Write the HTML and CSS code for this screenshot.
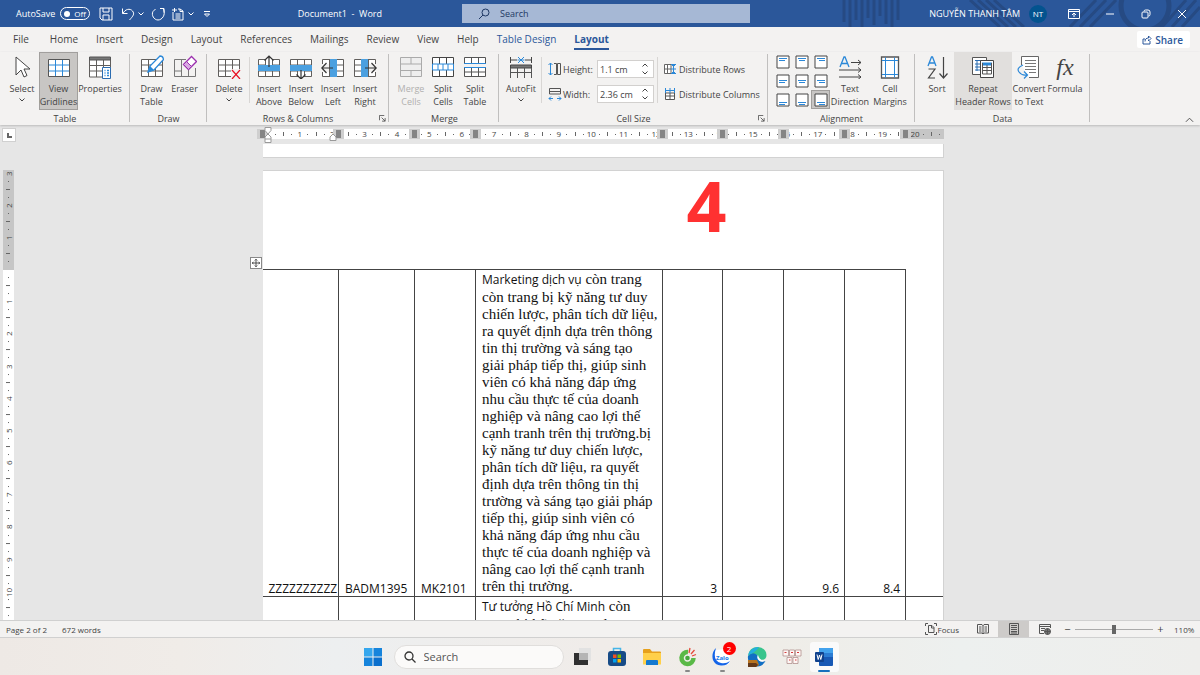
FILE: index.html
```html
<!DOCTYPE html>
<html lang="en">
<head>
  <meta charset="UTF-8">
  <meta name="viewport" content="width=device-width, initial-scale=1.0">
  <title>Document1 - Word</title>
  <link rel="stylesheet" href="styles.css">
</head>
<body>
  <!-- shared icon shapes -->
  <svg class="defs" aria-hidden="true">
    <symbol id="chev" viewBox="0 0 8 8"><path d="M1.5 2.5 4 5l2.5-2.5" fill="none" stroke="currentColor"/></symbol>
    <symbol id="grid" viewBox="0 0 24 24"><path d="M1.5 4.5h21v17h-21zM1.5 10h21M1.5 16h21M8.5 4.500v17M15.500 4.500v17" fill="#fff" stroke="#605e5c"/></symbol>
    <symbol id="launch" viewBox="0 0 8 8"><path d="M.5 6V.5H6M3 3l4 4M7 3.500V7H3.500" fill="none" stroke="#555"/></symbol>
  </svg>

  <header class="titlebar">
    <svg class="pattern" viewBox="0 0 360 27" aria-hidden="true">
      <g stroke="#264a83" stroke-width="3" fill="none">
        <path d="M4 0v22M10 0v27M16 0v20M22 0v27M28 0v18M34 0v25M40 0v16M46 0v24M52 0v27M58 0v20"/>
        <path d="M130 0l30 27M138 0l30 27M146 0l30 27M154 0l30 27M230 27l26-27M240 27l26-27M250 27l26-27"/>
        <circle cx="305" cy="6" r="24" stroke-width="5"/><path d="M322 27l24-27M332 27l24-27M342 27l18-20"/>
      </g>
    </svg>
    <div class="quick">
      <label class="autosave">AutoSave <input type="checkbox" role="switch"><span class="toggle"><i></i>Off</span></label>
      <button class="tb save" aria-label="Save"><svg viewBox="0 0 14 14"><path d="M1 1h12v12H3l-2-2zM4 1v4h6V1M4 13V8h6v5"/></svg></button>
      <button class="tb" aria-label="Undo"><svg viewBox="0 0 14 14"><path d="M1.500 1.500v5h5M2 6.500C4 2 9 1 11.500 4s.5 5-3 9"/></svg></button>
      <button class="tb tiny" aria-label="Undo list"><svg><use href="#chev"/></svg></button>
      <button class="tb redo" aria-label="Repeat"><svg viewBox="0 0 14 14"><path d="M9 1.500h4v4M12.500 2C15 8 11 13 7 13S0 8 2 4.500L4.500 2"/></svg></button>
      <button class="tb" aria-label="Paste"><svg viewBox="0 0 14 14"><path d="M2 5v8h10V4L9 2H7M4.500 7h5M4.500 9h5M4.500 11h5M1 3h5M3.500 1v4M9 2v2.500h3"/></svg></button>
      <button class="tb tiny" aria-label="Paste list"><svg><use href="#chev"/></svg></button>
      <button class="tb tiny more" aria-label="Customize"><svg viewBox="0 0 8 8"><path d="M1 1.500h6M1.500 4 4 6.500 6.500 4z"/></svg></button>
      <span class="doc-name">Document1&nbsp; -&nbsp; Word</span>
    </div>
    <label class="search">
      <svg viewBox="0 0 12 12"><circle cx="7.500" cy="4.500" r="3.500"/><path d="M5 7 1 11"/></svg>
      <input type="text" placeholder="Search" aria-label="Search">
    </label>
    <div class="window">
      <span class="user">NGUYỄN THANH TÂM</span>
      <span class="avatar">NT</span>
      <button class="tb win" aria-label="Ribbon display"><svg viewBox="0 0 12 12"><path d="M.5 1.500h11v9H.5zM.5 3.500h11M6 9V5M4 7l2-2 2 2"/></svg></button>
      <button class="tb win" aria-label="Minimize"><svg viewBox="0 0 12 12"><path d="M2 6h8"/></svg></button>
      <button class="tb win" aria-label="Restore"><svg viewBox="0 0 12 12"><rect x="2" y="4" width="6" height="6" rx="1"/><path d="M4 3.500Q4 2 5.500 2H8q2 0 2 2v2.500Q10 8 8.500 8"/></svg></button>
      <button class="tb win" aria-label="Close"><svg viewBox="0 0 12 12"><path d="m2 2 8 8M10 2l-8 8"/></svg></button>
    </div>
  </header>

  <nav class="tabs">
    <a href="#" class="file">File</a><a href="#">Home</a><a href="#">Insert</a><a href="#">Design</a><a href="#">Layout</a><a href="#">References</a><a href="#">Mailings</a><a href="#">Review</a><a href="#">View</a><a href="#">Help</a><a href="#" class="context">Table Design</a><a href="#" class="context active">Layout</a>
    <button class="share"><svg viewBox="0 0 10 10"><path d="M3 4H1v5h7V6M3 6.500C3 4 4.500 3 6.500 3V1L9 3.500 6.500 6V4.500"/></svg>Share</button>
  </nav>

  <section class="ribbon">
    <div class="group g-table">
      <div class="tools">
        <button class="tool select"><svg viewBox="0 0 24 24"><path d="M6 2v18l5-5 3 7 3-1.500-3-6.500h6z" fill="#fff" stroke="#444"/></svg>Select<svg class="chev"><use href="#chev"/></svg></button>
        <button class="tool gridlines pressed"><svg viewBox="0 0 24 24"><path d="M1.500 4.500h21v17h-21z" fill="#fff" stroke="#555"/><path d="M2 10h20M2 16h20M8.500 5v16M15.500 5v16" stroke="#2b88d8"/></svg>View<br>Gridlines</button>
        <button class="tool props"><svg viewBox="0 0 24 24"><path d="M1.500 5v17h21V5M1.500 10.500h21M1.500 16h21M8.500 5v17M15.500 5v17" fill="#fff" stroke="#605e5c"/><path d="M1.500 2h21v3h-21z" fill="#777" stroke="#555"/><path d="M14.500 12.500h8v11h-8z" fill="#fff" stroke="#2b6cb0"/><path d="M16.500 15.500h1M19 15.500h2M16.500 18h1M19 18h2M16.500 20.500h1M19 20.500h2" stroke="#2b88d8" stroke-width="1.500"/></svg>Properties</button>
      </div>
      <h2>Table</h2>
    </div>
    <div class="group g-draw">
      <div class="tools">
        <button class="tool"><svg viewBox="0 0 24 24"><use href="#grid"/><path d="m8 17 2-6L20 1q3 0 3.500 3.500L14 15z" fill="#fff" stroke="#2b88d8" stroke-width="1.300"/><path d="m8 17 2-6 4 4z" fill="#2b88d8"/></svg>Draw<br>Table</button>
        <button class="tool"><svg viewBox="0 0 24 24"><path d="M22.500 13v8.500h-21v-17H13M8.500 4.500v17M15.500 15v6.500M1.500 16h7" fill="none" stroke="#777"/><path d="m10.500 9.500 8-8 5 5-8 8z" fill="#fff" stroke="#9b2fae" stroke-width="1.300"/><path d="m10.500 9.500 3-3 5 5-3 3z" fill="#d9a9e3" stroke="#9b2fae"/></svg>Eraser</button>
      </div>
      <h2>Draw</h2>
    </div>
    <div class="group g-rows">
      <div class="tools">
        <button class="tool"><svg viewBox="0 0 24 24"><use href="#grid"/><path d="M14 14h10v10H14z" fill="#f3f2f1"/><path d="m15 15 8 9M23 15l-8 9" stroke="#e81123" stroke-width="1.200"/></svg>Delete<svg class="chev"><use href="#chev"/></svg></button>
        <span class="rule"></span>
        <button class="tool"><svg viewBox="0 0 24 24"><use href="#grid"/><path d="M1 10h22v6H1z" fill="#4ba0e0"/><path d="M9 4h6v6H9z" fill="#fff"/><path d="M12 12V1M7.500 5.500 12 1l4.500 4.500" fill="none" stroke="#333" stroke-width="1.200"/></svg>Insert<br>Above</button>
        <button class="tool"><svg viewBox="0 0 24 24"><use href="#grid"/><path d="M1 10h22v6H1z" fill="#4ba0e0"/><path d="M9 16.500h6V22H9z" fill="#fff"/><path d="M12 15v9M7.500 19.500 12 24l4.500-4.500" fill="none" stroke="#333" stroke-width="1.200"/></svg>Insert<br>Below</button>
        <button class="tool"><svg viewBox="0 0 24 24"><use href="#grid"/><path d="M9 4h7v18H9z" fill="#4ba0e0"/><path d="M1 9h7v8H1z" fill="#f3f2f1"/><path d="M12 13H1M5.500 8 .8 13l4.700 5" fill="none" stroke="#333" stroke-width="1.200"/></svg>Insert<br>Left</button>
        <button class="tool"><svg viewBox="0 0 24 24"><use href="#grid"/><path d="M8 4h7v18H8z" fill="#4ba0e0"/><path d="M16 9h8v8h-8z" fill="#f3f2f1"/><path d="M12 13h11M18.500 8l4.700 5-4.700 5" fill="none" stroke="#333" stroke-width="1.200"/></svg>Insert<br>Right</button>
      </div>
      <h2>Rows &amp; Columns</h2>
      <button class="launcher" aria-label="Rows and columns options"><svg><use href="#launch"/></svg></button>
    </div>
    <div class="group g-merge">
      <div class="tools">
        <button class="tool" disabled><svg viewBox="0 0 24 24"><path d="M1.500 2.500h21v19h-21zM1.500 9h21M1.500 15.500h21M12 2.500V9M12 15.500v6" fill="#eee" stroke="#aaa"/></svg>Merge<br>Cells</button>
        <button class="tool"><svg viewBox="0 0 24 24"><path d="M1.500 2.500h21v19h-21zM8.500 2.500v19M15.500 2.500v19" fill="#fff" stroke="#444"/><path d="M1.500 9h21v6h-21zM7 9v6M12 9v6M17 9v6" fill="#fff" stroke="#2b88d8"/></svg>Split<br>Cells</button>
        <button class="tool"><svg viewBox="0 0 24 24"><path d="M1.500 2.500h21v6h-21zM8.500 2.500v6M15.500 2.500v6M1.500 12.500h21v9h-21zM1.500 17h21M8.500 12.500v9M15.500 12.500v9" fill="#fff" stroke="#555"/><path d="M1 8.500h22M1 12.500h22" stroke="#2b88d8"/></svg>Split<br>Table</button>
      </div>
      <h2>Merge</h2>
    </div>
    <div class="group g-size">
      <div class="tools">
        <button class="tool"><svg viewBox="0 0 24 24"><path d="M1.500 2v6M22.500 2v6M1.500 5H8M16 5h6.500" stroke="#444"/><path d="m9 2 6 6M15 2 9 8M8.500 5h7" stroke="#2b88d8"/><path d="M1.500 10h21v3h-21z" fill="#777" stroke="#444"/><path d="M1.500 13v10M22.500 13v10M8.500 13v10M15.500 13v10M1.500 17.500h21" fill="none" stroke="#555"/></svg>AutoFit<svg class="chev"><use href="#chev"/></svg></button>
        <span class="rule"></span>
        <div class="sizes">
          <div class="field">
            <svg viewBox="0 0 14 14"><path d="M2.500 1v12M.5 3l2-2 2 2M.5 11l2 2 2-2" fill="none" stroke="#2b88d8"/><path d="M6 1.500h2.500v11H6M9.500 1.500h3v11h-3z" fill="none" stroke="#555"/></svg>
            <label for="cell-height">Height:</label>
            <span class="spin"><input id="cell-height" type="text" value="1.1 cm"><span class="arrows"><button class="up" aria-label="Increase height"><svg><use href="#chev"/></svg></button><button aria-label="Decrease height"><svg><use href="#chev"/></svg></button></span></span>
          </div>
          <div class="field">
            <svg viewBox="0 0 14 14"><path d="M1.500 7V1.500h11V7M1.500 4.500h11M1.500 7h11" fill="none" stroke="#555"/><path d="M1 11.500h4M9 11.500h4M3 9.500l-2 2 2 2M11 9.500l2 2-2 2" fill="none" stroke="#2b88d8"/></svg>
            <label for="cell-width">Width:</label>
            <span class="spin"><input id="cell-width" type="text" value="2.36 cm"><span class="arrows"><button class="up" aria-label="Increase width"><svg><use href="#chev"/></svg></button><button aria-label="Decrease width"><svg><use href="#chev"/></svg></button></span></span>
          </div>
        </div>
        <span class="rule"></span>
        <div class="distribute">
          <button><svg viewBox="0 0 12 12"><path d="M.5 1.500H7v9H.5zM.5 6H7M3.500 1.500v9" fill="#fff" stroke="#666"/><path d="M7 1.500h5M7 6h5M7 10.500h5M9.500 1v10M8 3l1.500-1.500L11 3M8 9l1.500 1.500L11 9" fill="none" stroke="#2b88d8"/></svg>Distribute Rows</button>
          <button><svg viewBox="0 0 12 12"><path d="M1.500 5v6.500h9V5zM1.500 8h9M6 5v6.500" fill="#fff" stroke="#555"/><path d="M1.500 0v5M6 0v5M10.500 0v5M1 2.500h10" stroke="#2b88d8"/></svg>Distribute Columns</button>
        </div>
      </div>
      <h2>Cell Size</h2>
      <button class="launcher" aria-label="Cell size options"><svg><use href="#launch"/></svg></button>
    </div>
    <div class="group g-align">
      <div class="tools">
        <div class="align-grid" id="alignGrid"></div>
        <button class="tool"><svg viewBox="0 0 24 24"><path d="m2 12 4-10h1l4 10M3.500 8.500h6" fill="none" stroke="#2b88d8" stroke-width="1.300"/><path d="M13 7.500h10M20 5l3 2.500-3 2.500M1 15h22M20 12.500l3 2.500-3 2.500M1 22h22M20 19.500l3 2.500-3 2.500" fill="none" stroke="#444"/></svg>Text<br>Direction</button>
        <button class="tool margins"><svg viewBox="0 0 24 24"><path d="M3.500 2h17v21h-17z" fill="#fff" stroke="#555" stroke-width="1.300"/><path d="M7.500 2.500v20M16.500 2.500v20M4 5.500h16M4 19.500h16" stroke="#2b88d8"/></svg>Cell<br>Margins</button>
      </div>
      <h2>Alignment</h2>
    </div>
    <div class="group g-data">
      <div class="tools">
        <button class="tool sort"><svg viewBox="0 0 24 24"><path d="M3 11 6.500 2h1L11 11M4.500 8h5" fill="none" stroke="#2b88d8" stroke-width="1.300"/><path d="M3.500 14h6.500l-6.500 9H10M18.500 2v21M14.500 18.500l4 4.500 4-4.500" fill="none" stroke="#444" stroke-width="1.200"/></svg>Sort</button>
        <button class="tool repeat"><svg viewBox="0 0 24 24"><path d="M1.500 2.500h14v17h-14z" fill="#fff" stroke="#555"/><path d="M4 5.500h10M4 9h5M4 12h5M4 15h5M6 5v11" stroke="#2b6cb0"/><path d="M9.500 5.500h13v17h-13z" fill="#fff" stroke="#444"/><path d="M11 9h10" stroke="#2b88d8" stroke-width="3"/><path d="M11.500 8v11h9V8M11.500 12.500h9M11.500 15.500h9M16 10v9" fill="none" stroke="#555"/></svg>Repeat<br>Header Rows</button>
        <button class="tool"><svg viewBox="0 0 24 24"><path d="M4.500 10V1.500h17v21H12" fill="#fff" stroke="#666"/><path d="M8 5.500h11M8 8.500h11M8 11.500h11M8 14.500h11M12 17.500h7" stroke="#777"/><path d="M6 10Q-1 13 2 17t8 3M7 16.500l3.500 3.500L7 23.500" fill="none" stroke="#2b88d8" stroke-width="1.200"/></svg>Convert<br>to Text</button>
        <button class="tool formula"><span class="fx">fx</span>Formula</button>
      </div>
      <h2>Data</h2>
    </div>
    <button class="collapse" aria-label="Collapse the ribbon"><svg viewBox="0 0 10 6"><path d="m1 5 4-4 4 4"/></svg></button>
  </section>

  <main class="workspace">
    <aside class="left-rail">
      <button class="tab-stop" aria-label="Tab selector"><i></i></button>
      <div class="v-ruler">
        <div class="v-top" id="rulerTop"></div>
        <div class="v-body" id="rulerBody"></div>
      </div>
    </aside>
    <div class="canvas">
      <div class="h-ruler">
        <div class="h-scale" id="rulerH"></div>
        <div class="markers" id="markers"></div>
        <svg class="indent first" viewBox="0 0 8 16"><path d="M1 .5h6v3L4 7 1 3.500zM4 7l3 3v5.500H1V10zM1 12h6" fill="#fff" stroke="#999"/></svg>
        <svg class="indent right" viewBox="0 0 8 8"><path d="m4 1 3 3v3.500H1V4z" fill="#fff" stroke="#999"/></svg>
      </div>
      <div class="sheet previous"></div>
      <article class="sheet">
        <button class="move" aria-label="Move table"><svg viewBox="0 0 12 12"><path d="M6 1.500v9M1.500 6h9M4.500 3 6 1.500 7.500 3M4.500 9 6 10.500 7.500 9M3 4.500 1.500 6 3 7.500M9 4.500 10.500 6 9 7.500"/></svg></button>
        <strong class="step">4</strong>
        <table>
          <colgroup><col class="c-76"><col class="c-76"><col class="c-61"><col class="c-187"><col class="c-60"><col class="c-61"><col class="c-61"><col class="c-61"><col></colgroup>
          <tbody>
            <tr class="filled">
              <td>ZZZZZZZZZZ</td>
              <td>BADM1395</td>
              <td>MK2101</td>
              <td class="text"><span>Marketing dịch vụ</span> còn trang<br>còn trang bị kỹ năng tư duy<br>chiến lược, phân tích dữ liệu,<br>ra quyết định dựa trên thông<br>tin thị trường và sáng tạo<br>giải pháp tiếp thị, giúp sinh<br>viên có khả năng đáp ứng<br>nhu cầu thực tế của doanh<br>nghiệp và nâng cao lợi thế<br>cạnh tranh trên thị trường.bị<br>kỹ năng tư duy chiến lược,<br>phân tích dữ liệu, ra quyết<br>định dựa trên thông tin thị<br>trường và sáng tạo giải pháp<br>tiếp thị, giúp sinh viên có<br>khả năng đáp ứng nhu cầu<br>thực tế của doanh nghiệp và<br>nâng cao lợi thế cạnh tranh<br>trên thị trường.</td>
              <td class="num">3</td>
              <td></td>
              <td class="num">9.6</td>
              <td class="num">8.4</td>
              <td class="outer"></td>
            </tr>
            <tr>
              <td></td><td></td><td></td>
              <td class="text"><span>Tư tưởng Hồ Chí Minh</span> còn<br>trang bị kỹ năng tư duy</td>
              <td></td><td></td><td></td><td></td><td class="outer"></td>
            </tr>
          </tbody>
        </table>
      </article>
    </div>
  </main>

  <footer class="statusbar">
    <span>Page 2 of 2</span><span>672 words</span>
    <div class="views">
      <button class="focus"><svg viewBox="0 0 12 12"><path d="M.5 3V.5H3M9 .5h2.500V3M.5 9v2.500H3M9 11.500h2.500V9M3.500 2.500H7l2 2v5H3.500zM6.500 2.500v2.500H9"/></svg>Focus</button>
      <button class="view" aria-label="Read mode"><svg viewBox="0 0 12 12"><path d="M.5 1.500H5l1 1 1-1h4.500v8.500H7l-1 1-1-1H.5zM6 2v9M2 4h2.500M2 6h2.500M2 8h2.500M7.500 4H10M7.500 6H10M7.500 8H10"/></svg></button>
      <button class="view on" aria-label="Print layout"><svg viewBox="0 0 12 12"><path d="M1.500.5h9v11h-9zM3 2.500h6M3 4.500h6M3 6.500h6M3 8.500h6M3 10h6"/></svg></button>
      <button class="view" aria-label="Web layout"><svg viewBox="0 0 12 12"><path d="M5 10.500H.5v-9h11V5M.5 3.500h11M2 5.500h4M2 7.500h3"/><circle cx="8.500" cy="8.500" r="3" fill="#777"/><path d="M5.500 8.500h6M8.500 5.500v6"/></svg></button>
      <button class="zoom-btn" aria-label="Zoom out">−</button>
      <input type="range" min="10" max="210" value="110" aria-label="Zoom">
      <button class="zoom-btn" aria-label="Zoom in">+</button>
      <span class="percent">110%</span>
    </div>
  </footer>

  <nav class="taskbar">
    <button class="app" aria-label="Start"><svg viewBox="0 0 20 20"><g fill="#1684dc"><path d="M1 1h8.500v8.500H1z" fill="#35a7ee"/><path d="M10.500 1H19v8.500h-8.500zM1 10.500h8.500V19H1z"/><path d="M10.500 10.500H19V19h-8.500z" fill="#0a6fcd"/></g></svg></button>
    <label class="task-search"><svg viewBox="0 0 12 12"><circle cx="5" cy="5" r="4"/><path d="m8 8 3.500 3.500"/></svg><input type="text" placeholder="Search" aria-label="Search Windows"></label>
    <button class="app" aria-label="Task view"><svg viewBox="0 0 20 20"><path d="M7 1h12v13H7z" fill="#e2e2e2"/><path d="M2 6h14v12H2z" fill="#303030"/><path d="M7 6h9v7H7z" fill="#b5b5b5"/></svg></button>
    <button class="app" aria-label="Store"><svg viewBox="0 0 20 20"><path d="M6.500 5V1.500h7V5" fill="none" stroke="#45b5e8" stroke-width="1.500"/><rect x="1" y="4" width="18" height="15" rx="3" fill="#174b87"/><path d="M6 7.500h3.500V11H6z" fill="#f25022"/><path d="M10.500 7.500H14V11h-3.500z" fill="#7fba00"/><path d="M6 12h3.500v3.500H6z" fill="#00a4ef"/><path d="M10.500 12H14v3.500h-3.500z" fill="#ffb900"/></svg></button>
    <button class="app" aria-label="File Explorer"><svg viewBox="0 0 20 20"><path d="M1 3q0-1 1-1h6l2 2.500h8q1 0 1 1V17H1z" fill="#e6a01c"/><path d="M1 6h18v11.500H1z" fill="#ffd04a"/><path d="M4 18v-4q0-1 1-1h10q1 0 1 1v4z" fill="#1479d0"/></svg></button>
    <button class="app running" aria-label="Coc Coc"><svg viewBox="0 0 20 20"><path d="M11 5a6 6 0 1 0 5.500 6" fill="none" stroke="#5ab947" stroke-width="4.500"/><circle cx="10.500" cy="11" r="2.300" fill="#45a83d"/><path d="m12 6 1-5M14 7l3.500-4M15 9l4-1.500" stroke="#e5493a" stroke-width="1.300"/></svg></button>
    <button class="app running" aria-label="Zalo"><svg viewBox="0 0 20 20"><path d="M2 3Q0 10 3 15q5 6 14 2l1-3-1-12z" fill="#fff"/><path d="M4 1Q-1 6 1 13q2 5 8 5.500 6 .5 9-4.500-4 3-9 2Q0 14 4 1z" fill="#1464e8"/><text x="4" y="13" font-size="6" font-weight="700" fill="#1677e8">Zalo</text></svg><span class="badge">2</span></button>
    <button class="app" aria-label="Edge"><svg viewBox="0 0 20 20"><path d="M1 9Q2 0 11 0q8 1 8.500 8 0 5-6 5-3 0-2-3Q9 5 1 9z" fill="#38c48c"/><path d="M1 9q5-5 9-1 2 2 1.500 4 1 4 7 2-4 7-11 5Q0 17 1 9z" fill="#126fc4"/><path d="M1 8Q4 0 12 0q-4 6-11 8z" fill="#24aee0"/><path d="M11 8q-2 3 1 5.500 2 1.500 6 .5-6-1-7-6z" fill="#fff"/><path d="M1 13h9l2 5-3 2H1z" fill="#b77320"/><path d="M1 16h8l2 2-2 2H1z" fill="#643919"/></svg></button>
    <button class="app" aria-label="Keys"><svg viewBox="0 0 20 20"><g fill="#fff6f4" stroke="#a98582" stroke-width=".7"><path d="M1 3h5.500v6H1zM7.500 3h5v6h-5zM13.500 3H19v6h-5.500zM5 10.500h5v6H5zM11 10.500h5v6h-5z"/></g><path d="M2.500 5.500h2M9 5.500h2M15 5.500h2M7 13h1.500M13 13h1.500" stroke="#d43c3c"/></svg></button>
    <button class="app word" aria-label="Word"><svg viewBox="0 0 20 20"><rect x="5" y="1" width="14" height="18" rx="1" fill="#1859b5"/><path d="M5 2q0-1 1-1h12q1 0 1 1v4H5z" fill="#42a2ed"/><path d="M5 6h14v4H5z" fill="#2b7cd3"/><rect x="1" y="5" width="9" height="10" rx="1" fill="#10428e"/><path d="m3 7.500 1.200 5L5.500 8l1.300 4.500L8 7.500" fill="none" stroke="#fff"/></svg></button>
  </nav>

  <script>
    // quarter centimetre ticks, the number sits on every fourth one
    function ticks(id, count, reverse) {
      const ruler = document.getElementById(id);
      for (let i = 1; i <= count; i++) {
        const tick = document.createElement("span");
        if (i % 4 === 0) tick.textContent = i / 4;
        else tick.className = i % 4 === 2 ? "half" : "dot";
        if (reverse) ruler.prepend(tick);
        else ruler.appendChild(tick);
      }
    }
    ticks("rulerH", 83);
    ticks("rulerTop", 12, true);
    ticks("rulerBody", 43);

    // column markers, in px from the left edge of the page
    [-6, 70, 146, 207, 394, 454, 515, 576, 637].forEach(x => {
      const mark = document.createElement("i");
      mark.style.left = x + "px";
      document.getElementById("markers").appendChild(mark);
    });

    // nine cell alignment buttons
    ["Top", "Center", "Bottom"].forEach((row, r) => {
      ["Left", "Center", "Right"].forEach((col, c) => {
        const y = 3 + r * 3;
        const x = 3 + c;
        document.getElementById("alignGrid").innerHTML +=
          `<button aria-label="Align ${row} ${col}" class="${r === 2 && c === 2 ? "pressed" : ""}">
            <svg viewBox="0 0 14 14"><path d="M1 1h12v12H1z" fill="#fff" stroke="#444"/>
            <path d="M3 ${y + .5}h8M${x} ${y + 2.5}h6" stroke="#2b88d8"/></svg></button>`;
      });
    });
  </script>
</body>
</html>
```

FILE: styles.css
```css
* {
  box-sizing: border-box;
}

body {
  margin: 0;
  height: 100vh;
  display: flex;
  flex-direction: column;
  overflow: hidden;
  font-family: "Open Sans", "Noto Sans", sans-serif;
  font-size: 9px;
  color: #444;
  background: #e6e6e6;
}

button, input {
  font: inherit;
  color: inherit;
}

button {
  padding: 0;
  border: 0;
  background: none;
}

a {
  color: inherit;
  text-decoration: none;
}

svg {
  display: block;
  flex: none;
}

.defs {
  position: absolute;
  width: 0;
  height: 0;
}

/* title bar */
.titlebar {
  position: relative;
  flex: none;
  height: 27px;
  display: grid;
  grid-template-columns: 462px 24% 1fr;
  align-items: center;
  background: #2b579a;
  color: #fff;
}

.pattern {
  position: absolute;
  right: 0;
  top: 0;
  width: 360px;
  height: 27px;
}

.quick, .window {
  position: relative;
  display: flex;
  align-items: center;
}

.quick {
  padding-left: 16px;
}

.autosave {
  display: flex;
  align-items: center;
  gap: 5px;
  margin-right: 9px;
}

.autosave input {
  position: absolute;
  opacity: 0;
}

.toggle {
  display: flex;
  align-items: center;
  gap: 4px;
  width: 30px;
  height: 13px;
  padding-left: 3px;
  border: 1px solid #fff;
  border-radius: 7px;
  font-size: 8px;
}

.toggle i {
  width: 6px;
  height: 6px;
  border-radius: 50%;
  background: #fff;
}

.tb svg {
  width: 14px;
  height: 14px;
  fill: none;
  stroke: #fff;
}

.tb.save {
  margin-right: 8px;
}

.tb.redo {
  margin: 0 6px;
}

.tb.tiny {
  margin-left: 2px;
}

.tb.tiny svg {
  width: 8px;
  height: 8px;
}

.tb.more {
  margin-left: 8px;
}

.doc-name {
  margin-left: auto;
  margin-right: 80px;
}

.search {
  display: flex;
  align-items: center;
  gap: 10px;
  height: 19px;
  padding-left: 16px;
  background: #a6b8d5;
  color: #1f3864;
}

.search svg {
  width: 12px;
  height: 12px;
  fill: none;
  stroke: #1f3864;
}

.search input, .task-search input {
  flex: 1;
  min-width: 0;
  padding: 0;
  border: 0;
  outline: 0;
  background: none;
}

.search input::placeholder {
  color: #1f3864;
  opacity: 1;
}

.window {
  justify-content: flex-end;
}

.avatar {
  width: 18px;
  height: 18px;
  margin: 0 9px;
  border-radius: 50%;
  background: #03538f;
  font-size: 8px;
  line-height: 18px;
  text-align: center;
}

.win {
  width: 36px;
  display: flex;
  justify-content: center;
}

.win svg {
  width: 12px;
  height: 12px;
}

/* tabs */
.tabs {
  flex: none;
  height: 25px;
  display: flex;
  align-items: center;
  gap: 18px;
  padding: 0 10px 0 13px;
  background: #f3f2f1;
  font-size: 10px;
}

.tabs a {
  line-height: 18px;
  border-bottom: 2px solid transparent;
  white-space: nowrap;
}

.tabs .file {
  margin-right: 3px;
}

.tabs .context {
  color: #2b579a;
}

.tabs .active {
  font-weight: 700;
  border-color: #2b579a;
}

.share {
  display: flex;
  align-items: center;
  gap: 3px;
  height: 17px;
  margin-left: auto;
  padding: 0 7px 0 5px;
  border-radius: 2px;
  background: #fff;
  color: #2b579a;
  font-weight: 600;
}

.share svg {
  width: 10px;
  height: 10px;
  fill: none;
  stroke: #2b579a;
}

/* ribbon */
.ribbon {
  position: relative;
  z-index: 2;
  flex: none;
  display: flex;
  height: 73px;
  background: #f3f2f1;
  box-shadow: 0 1px 2px #bbb;
}

.group {
  position: relative;
  flex: none;
  display: flex;
  flex-direction: column;
  justify-content: space-between;
  padding: 0 5px;
}

.group::after {
  content: "";
  position: absolute;
  right: 0;
  top: 2px;
  bottom: 3px;
  width: 1px;
  background: #c0bfbe;
}

.g-table { width: 130px; }
.g-draw { width: 77px; }
.g-rows { width: 182px; }
.g-merge { width: 110px; }
.g-size { width: 269px; }
.g-align { width: 147px; }
.g-data { width: 175px; }

.g-merge {
  padding-left: 6px;
}

.group h2 {
  margin: 0;
  font-size: 9px;
  line-height: 13px;
  font-weight: 400;
  text-align: center;
}

.tools {
  display: flex;
}

.tool {
  flex: none;
  width: 32px;
  height: 58px;
  padding-top: 3px;
  display: flex;
  flex-direction: column;
  align-items: center;
  line-height: 13px;
  white-space: nowrap;
}

.tool > svg:first-child {
  width: 24px;
  height: 24px;
  margin-bottom: 3px;
}

.tool .chev {
  width: 8px;
  height: 8px;
  margin-top: 1px;
}

.tool:disabled {
  color: #b1b0af;
}

.g-draw .tool {
  width: 33px;
}

.tool.select, .g-rows .tool:first-child, .g-size .tool {
  width: 34px;
}

.tool.gridlines {
  width: 39px;
}

.tool.props {
  width: 44px;
}

.pressed {
  background: #c8c6c4;
  box-shadow: inset 0 0 0 1px #a19f9d;
}

.rule {
  flex: none;
  width: 1px;
  height: 46px;
  margin: 5px 3px 0;
  background: #d8d6d4;
}

.launcher {
  position: absolute;
  right: 3px;
  bottom: 3px;
}

.launcher svg {
  width: 7px;
  height: 7px;
}

.sizes, .distribute {
  display: flex;
  flex-direction: column;
  gap: 7px;
  padding: 8px 0 0 3px;
}

.field {
  display: flex;
  align-items: center;
  height: 18px;
}

.field > svg {
  width: 14px;
  height: 14px;
  margin-right: 1px;
}

.field label {
  width: 34px;
}

.spin {
  display: flex;
  width: 57px;
  height: 18px;
  border: 1px solid #d2d0ce;
  background: #fff;
}

.spin input {
  width: 43px;
  padding: 0 0 0 2px;
  border: 0;
  background: none;
}

.arrows {
  display: flex;
  flex-direction: column;
  justify-content: center;
}

.arrows svg {
  width: 8px;
  height: 8px;
}

.arrows .up svg {
  transform: rotate(180deg);
}

.distribute button {
  display: flex;
  align-items: center;
  gap: 3px;
  height: 18px;
  white-space: nowrap;
}

.distribute svg {
  width: 12px;
  height: 12px;
}

.align-grid {
  display: grid;
  grid-template-columns: repeat(3, 19px);
  grid-auto-rows: 19px;
}

.align-grid button {
  display: grid;
  place-items: center;
}

.align-grid svg {
  width: 14px;
  height: 14px;
}

.g-align .tool {
  width: 40px;
}

.g-data .tool {
  width: 34px;
}

.g-data .tool.repeat {
  width: 58px;
  background: #e1dfdd;
}

.g-data .tool.formula {
  width: 38px;
}

.fx {
  height: 27px;
  font: italic 24px/24px "Liberation Serif", serif;
}

.collapse {
  margin: auto 6px 2px auto;
}

.collapse svg {
  width: 9px;
  height: 6px;
  fill: none;
  stroke: #444;
}

/* document */
.workspace {
  flex: 1;
  min-height: 0;
  display: flex;
  padding-right: 12px;
  overflow: hidden;
}

.left-rail {
  flex: none;
  width: 18px;
  display: flex;
  flex-direction: column;
  padding: 3px 0 0 2px;
}

.tab-stop {
  flex: none;
  width: 14px;
  height: 14px;
  display: grid;
  place-items: center;
  margin-bottom: 28px;
  border: 1px solid #d0d0d0;
  background: #fff;
}

.tab-stop i {
  width: 5px;
  height: 5px;
  border: solid #666;
  border-width: 0 0 2px 2px;
}

.v-ruler {
  flex: 1;
  min-height: 0;
  display: flex;
  flex-direction: column;
  width: 11px;
  margin-left: 1px;
  font-size: 8px;
}

.v-top, .v-body {
  display: flex;
  flex-direction: column;
}

.v-top {
  flex: none;
  height: 100px;
  padding-bottom: 4px;
  background: #c6c6c6;
}

.v-body {
  flex: 1;
  min-height: 0;
  padding-top: 4px;
  background: #fff;
}

.v-ruler span {
  flex: 1 1 0;
  min-height: 0;
  display: flex;
  align-items: center;
  justify-content: center;
  line-height: 11px;
  writing-mode: vertical-rl;
  transform: rotate(180deg);
}

.canvas {
  flex: 1;
  display: flex;
  flex-direction: column;
  align-items: center;
}

.h-ruler {
  position: relative;
  flex: none;
  width: 681px;
  height: 10px;
  margin: 4px 0 5px;
  padding-left: 9px;
  background: linear-gradient(to right, #fff 641px, #c6c6c6 641px);
  font-size: 8px;
}

.h-scale {
  display: flex;
}

.h-scale span {
  flex: 1 1 0;
  min-width: 0;
  height: 10px;
  display: flex;
  align-items: center;
  justify-content: center;
  line-height: 10px;
}

.dot::before, .half::before {
  content: "";
  width: 1px;
  height: 1px;
  background: #666;
}

.h-scale .half::before {
  height: 4px;
}

.v-ruler .half::before {
  width: 4px;
}

.markers i {
  position: absolute;
  top: 0;
  width: 11px;
  height: 10px;
  border: solid #cfcfcf;
  border-width: 1px 3px;
  background: #858585;
}

.indent {
  position: absolute;
}

.indent.first {
  left: 1px;
  top: -2px;
  width: 8px;
  height: 16px;
}

.indent.right {
  left: 66px;
  top: 4px;
  width: 8px;
  height: 8px;
}

.sheet {
  position: relative;
  flex: none;
  width: 681px;
  padding-top: 98px;
  border: 1px solid #d2d2d2;
  border-width: 1px 1px 0 0;
  background: #fff;
}

.sheet.previous {
  height: 14px;
  margin-bottom: 12px;
  padding: 0;
  border-width: 0 1px 1px 0;
}

.move {
  position: absolute;
  left: -13px;
  top: 86px;
  width: 12px;
  height: 12px;
  border: 1px solid #888;
  background: #fff;
}

.move svg {
  width: 10px;
  height: 10px;
  fill: none;
  stroke: #333;
}

.step {
  position: absolute;
  left: 424px;
  top: -1px;
  font-size: 70px;
  line-height: 70px;
  color: #ff3131;
}

table {
  width: 100%;
  table-layout: fixed;
  border-collapse: collapse;
  font-size: 12px;
  line-height: 15px;
  color: #111;
}

.c-76 { width: 76px; }
.c-60 { width: 60px; }
.c-61 { width: 61px; }
.c-187 { width: 187px; }

td {
  padding: 0 6px;
  border: 1px solid #444;
  vertical-align: bottom;
  white-space: nowrap;
}

td:first-child {
  border-left: 0;
}

.filled td {
  height: 327px;
}

td.text {
  padding-top: 1px;
  font: 15px/17px "Liberation Serif", serif;
  vertical-align: top;
}

.text span {
  font: 12px/18px "Open Sans", sans-serif;
}

td.num {
  padding-right: 5px;
  text-align: right;
}

td.outer {
  border-top: 0;
  border-right: 0;
}

/* status bar */
.statusbar {
  position: relative;
  flex: none;
  display: flex;
  align-items: center;
  gap: 15px;
  height: 18px;
  padding: 0 6px;
  border-top: 1px solid #d0d0d0;
  border-bottom: 1px solid #d0d0d0;
  background: #f3f2f1;
  font-size: 8px;
}

.views {
  display: flex;
  align-items: center;
  height: 100%;
  margin-left: auto;
}

.views svg {
  width: 12px;
  height: 12px;
  fill: none;
  stroke: #555;
}

.focus {
  display: flex;
  align-items: center;
  gap: 1px;
  margin-right: 8px;
}

.view {
  width: 31px;
  height: 100%;
  display: grid;
  place-items: center;
}

.view.on {
  background: #cdcbc9;
}

.zoom-btn {
  width: 15px;
  font-size: 11px;
  line-height: 14px;
}

.views input {
  appearance: none;
  width: 78px;
  height: 10px;
  margin: 0;
  background: linear-gradient(#aaa, #aaa) center / 100% 1px no-repeat;
}

.views input::-webkit-slider-thumb {
  appearance: none;
  width: 4px;
  height: 9px;
  background: #666;
}

.percent {
  width: 20px;
  margin-left: 6px;
  text-align: right;
}

/* windows task bar */
.taskbar {
  flex: none;
  display: flex;
  align-items: center;
  justify-content: center;
  height: 37px;
  padding-right: 6px;
  background: linear-gradient(to right, #eee9e5, #f0ece8 15%, #edeff0 28%, #f0ece9 50%, #efede8 65%, #edf0ef 80%, #eeeeec);
}

.app {
  position: relative;
  flex: none;
  width: 35px;
  height: 30px;
  display: grid;
  place-items: center;
}

.app svg {
  width: 20px;
  height: 20px;
}

.app.running::after, .app.word::after {
  content: "";
  position: absolute;
  bottom: 0;
  width: 5px;
  height: 2px;
  border-radius: 1px;
  background: #888;
}

.app.word {
  width: 29px;
  border-radius: 3px;
  background: #fafafa;
}

.app.word::after {
  width: 12px;
  background: #1670bd;
}

.badge {
  position: absolute;
  left: 18px;
  top: 0;
  width: 13px;
  height: 13px;
  border-radius: 50%;
  background: #f00;
  color: #fff;
  font-size: 8px;
  line-height: 13px;
}

.task-search {
  display: flex;
  align-items: center;
  gap: 8px;
  width: 170px;
  height: 24px;
  margin: 0 1px 0 3px;
  padding-left: 9px;
  border: 1px solid #e0dedc;
  border-radius: 12px;
  background: #fbfaf9;
  font-size: 11px;
}

.task-search svg {
  width: 12px;
  height: 12px;
  fill: none;
  stroke: #333;
  stroke-width: 1.3;
}

.task-search input::placeholder {
  color: #555;
  opacity: 1;
}
```
